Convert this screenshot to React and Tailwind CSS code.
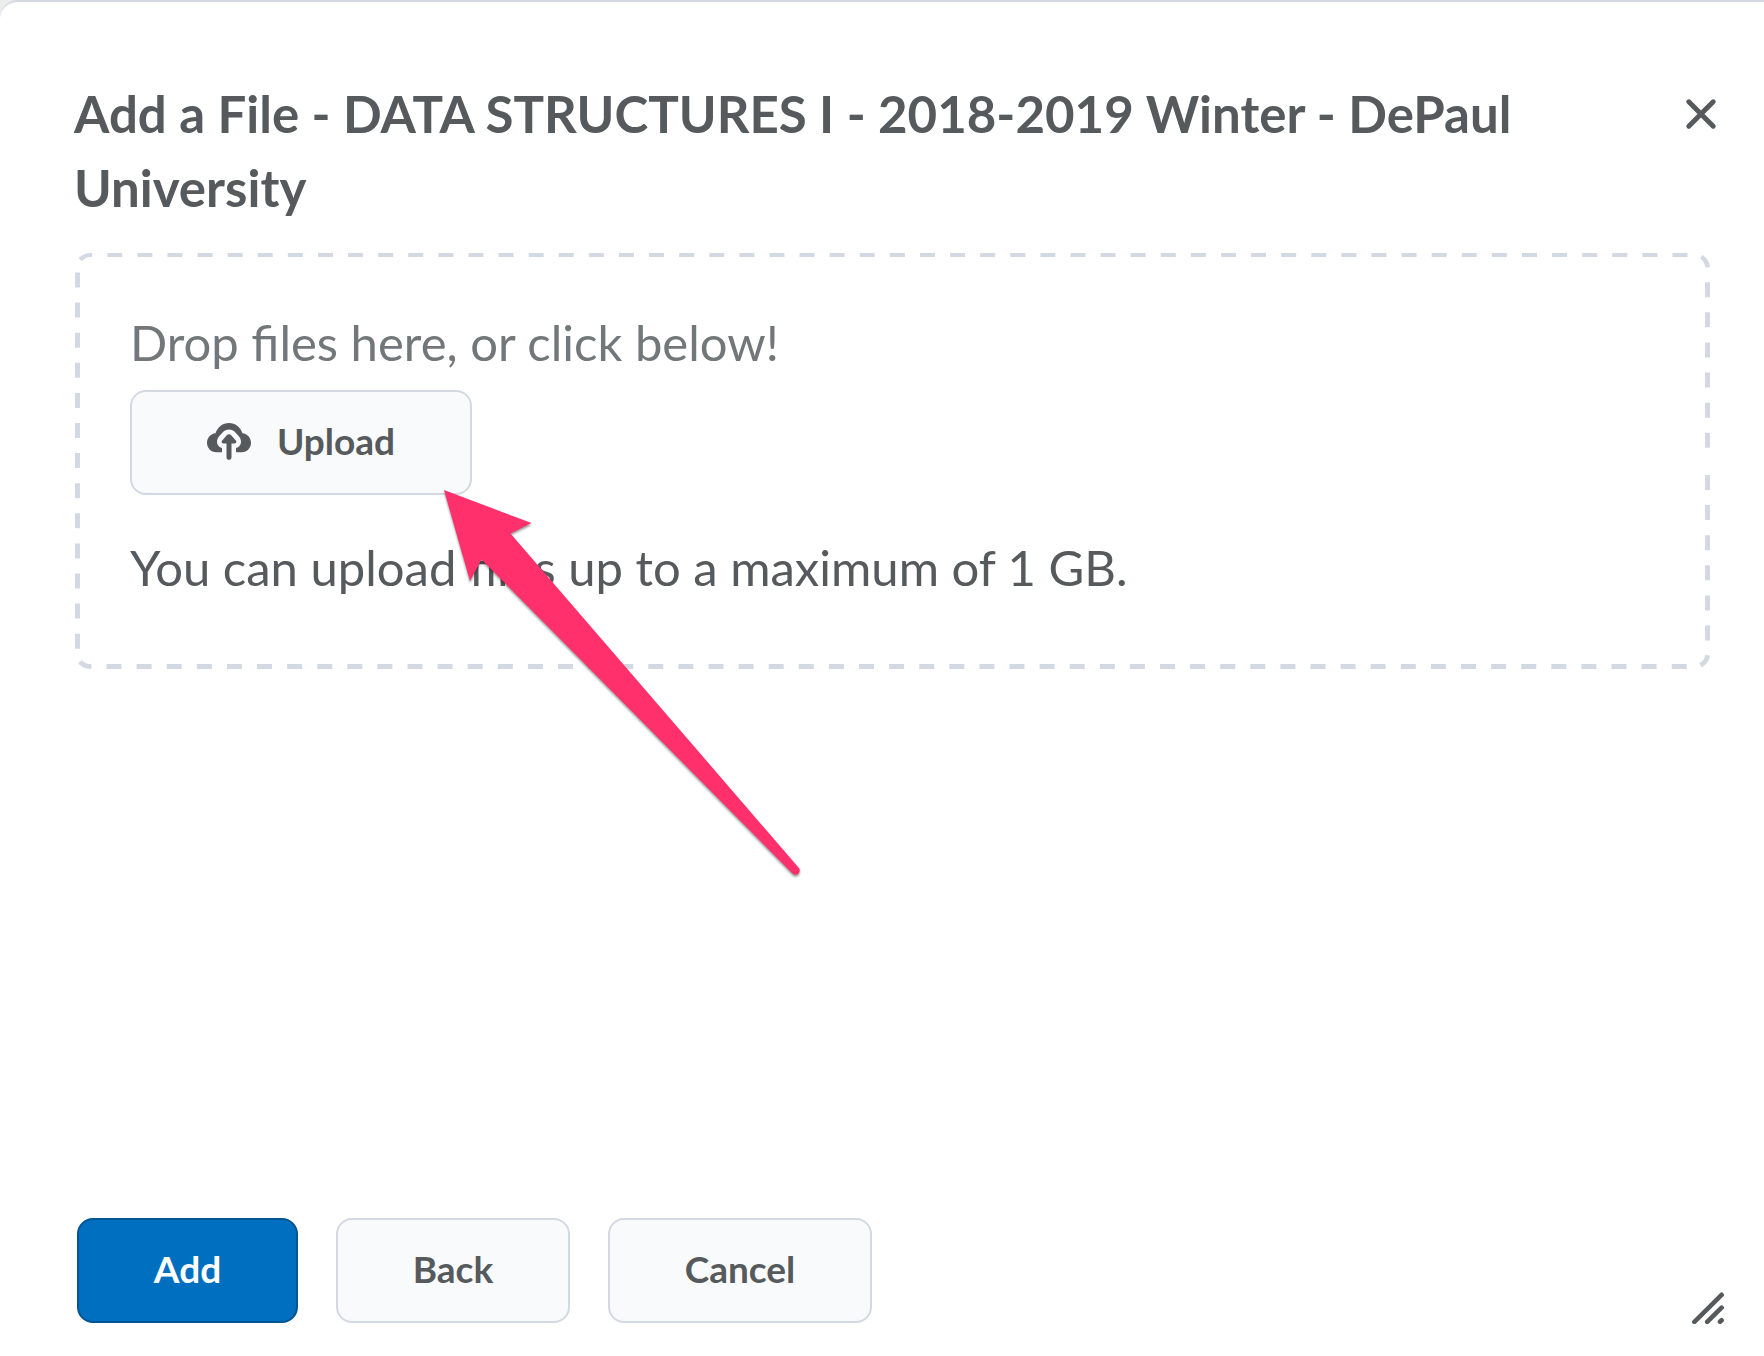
import React from 'react';

const secondaryButton =
  'h-[105px] rounded-2xl border-2 border-[#d3d9e3] bg-[#f9fafc] pb-1 text-[37px] font-bold text-[#565a5c]';

function CloseIcon() {
  return (
    <svg className="h-8 w-8" viewBox="0 0 32 32" fill="none" stroke="currentColor" strokeWidth="5" strokeLinecap="round" aria-hidden="true">
      <path d="M3.800 3.800 28.200 28.200M28.200 3.800 3.800 28.200" />
    </svg>
  );
}

function UploadIcon() {
  return (
    <svg className="h-[38px] w-11" viewBox="0 0 44 38" fill="currentColor" aria-hidden="true">
      <path d="M9.3 30.2C4 30.2 0 26 0 20.7c0-5 3.600-9 8.500-9.500C10.700 5 15.800 1 22 1s11.300 4 13.500 10.200c4.900.5 8.500 4.500 8.500 9.500 0 5.300-4 9.500-9.300 9.500H29v-4.200c3-.8 5-3 5-6 0-2.300-.9-4.500-2.400-6L27.500 9.600C24.500 6.700 19.500 6.700 16.500 9.600L12.400 14c-1.500 1.500-2.400 3.700-2.400 6 0 3 2 5.200 5 6v4.200z" />
      <path d="M22 12.200c.8 0 1.400.3 2 .9l4.800 5.300c1.200 1.400.4 3-1.300 3h-3v13.800c0 3.400-5 3.400-5 0V21.400h-3c-1.700 0-2.500-1.600-1.300-3L20 13.100c.6-.6 1.200-.9 2-.9z" />
    </svg>
  );
}

function ResizeIcon() {
  return (
    <svg className="h-8 w-8" viewBox="0 0 32 32" fill="none" stroke="#565a5c" strokeWidth="4.6" strokeLinecap="round" aria-hidden="true">
      <path d="M2.400 29.800 29.600 2.800M15.200 29.800 29.600 15.600M28 29.800l1.600-1.500" />
    </svg>
  );
}

// Dashed outline: the stroke runs on the outer edge, the inner fill trims it to 5px
function DashedOutline() {
  return (
    <svg className="absolute inset-0 h-full w-full rounded-[15px]" viewBox="0 0 1635 416" preserveAspectRatio="none" aria-hidden="true">
      <path
        d="M1635 222V401A15 15 0 0 1 1620 416H15A15 15 0 0 1 0 401V15A15 15 0 0 1 15 0H1620A15 15 0 0 1 1635 15V196"
        fill="none"
        stroke="#d3d9e3"
        strokeWidth="10"
        strokeDasharray="15 15.1"
      />
      <rect x="5" y="4" width="1625" height="407" rx="10" fill="#fff" />
    </svg>
  );
}

function PointerArrow() {
  return (
    <svg
      className="pointer-events-none absolute left-[310px] top-[181px] h-[392px] w-[372px] drop-shadow-[0_2px_1px_rgba(0,0,0,0.4)]"
      viewBox="0 0 372 392"
      aria-hidden="true"
    >
      <path d="M4 4 91.500 37 70.500 47.500 358.500 381.500A4 4 0 0 1 352.500 387.500L41.500 73.500 30 95Z" fill="#ff306c" />
    </svg>
  );
}

export default function App() {
  return (
    <div className="min-h-screen bg-[#ececec] font-['Lato',sans-serif]">
      <div
        role="dialog"
        aria-labelledby="dialog-title"
        className="flex min-h-screen flex-col rounded-tl-[18px] border-t-2 border-[#d3d9e3] bg-white pb-8 text-[#565a5c]"
      >
        {/* Header */}
        <header className="flex items-start justify-between pl-[74px] pr-[47px] pt-[75px]">
          <h1 id="dialog-title" className="max-w-[1500px] text-[51px] font-bold leading-[74px]">
            Add a File - DATA STRUCTURES I - 2018-2019 Winter - DePaul University
          </h1>
          <button type="button" aria-label="Close" className="mt-[21px]">
            <CloseIcon />
          </button>
        </header>

        {/* Drop zone */}
        <main className="ml-[75px] mr-[54px] mt-7">
          <section className="relative h-[416px] px-[55px] pt-[52px]">
            <DashedOutline />
            <div className="relative">
              <p className="text-[49px] leading-[74px] text-[#72777a]">Drop files here, or click below!</p>
              <button type="button" className={`${secondaryButton} mt-[11px] flex w-[342px] items-center justify-center gap-[26px]`}>
                <UploadIcon />
                Upload
              </button>
              <p className="mt-[35px] text-[49px] leading-[74px]">You can upload files up to a maximum of 1 GB.</p>
              <PointerArrow />
            </div>
          </section>
        </main>

        {/* Footer */}
        <footer className="mt-auto flex items-end justify-between pl-[77px] pr-10">
          <div className="flex gap-[38px] pb-px">
            <button type="button" className="h-[105px] w-[221px] rounded-2xl border-2 border-[#005694] bg-[#006fbf] pb-1 text-[37px] font-bold text-white">
              Add
            </button>
            <button type="button" className={`${secondaryButton} w-[234px]`}>
              Back
            </button>
            <button type="button" className={`${secondaryButton} w-[264px]`}>
              Cancel
            </button>
          </div>
          <ResizeIcon />
        </footer>
      </div>
    </div>
  );
}
